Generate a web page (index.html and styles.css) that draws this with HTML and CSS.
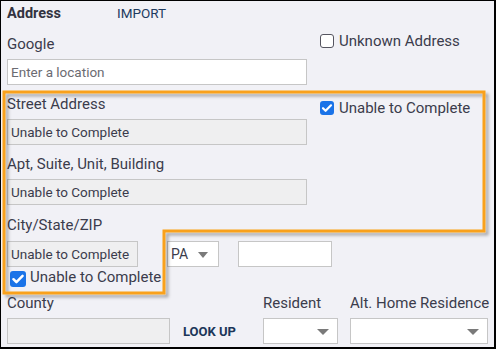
FILE: index.html
```html
<!DOCTYPE html>
<html lang="en">
<head>
  <meta charset="UTF-8" />
  <title>Address</title>
  <link rel="stylesheet" href="styles.css">
</head>
<body>
  <div class="shot">
    <div class="frame">
      <header class="head">
        <span class="title">Address</span>
        <span class="import">IMPORT</span>
      </header>

      <div class="row row-google">
        <label class="label">Google</label>
        <span class="check check-unknown"><span class="box"></span>Unknown Address</span>
      </div>
      <input class="field field-wide" type="text" placeholder="Enter a location">

      <div class="row row-street">
        <label class="label">Street Address</label>
        <span class="check check-street"><span class="box on"><svg viewBox="0 0 14 14"><path d="M3 7.2l2.6 2.6L11 4.3" /></svg></span>Unable to Complete</span>
      </div>
      <div class="field field-wide field-off">Unable to Complete</div>

      <div class="row">
        <label class="label">Apt, Suite, Unit, Building</label>
      </div>
      <div class="field field-wide field-off">Unable to Complete</div>

      <div class="row row-city">
        <label class="label">City/State/ZIP</label>
      </div>
      <div class="city-line">
        <div class="field field-city field-off">Unable to Complete</div>
        <div class="select select-state">PA<span class="arrow"></span></div>
        <div class="field field-zip"></div>
      </div>
      <div class="check check-city"><span class="box on"><svg viewBox="0 0 14 14"><path d="M3 7.2l2.6 2.6L11 4.3" /></svg></span>Unable to Complete</div>

      <div class="bottom">
        <div class="col">
          <label class="label">County</label>
          <div class="county-line">
            <div class="field field-county field-off"></div>
            <span class="lookup">LOOK UP</span>
          </div>
        </div>
        <div class="col">
          <label class="label">Resident</label>
          <div class="select select-resident"><span class="arrow"></span></div>
        </div>
        <div class="col">
          <label class="label">Alt. Home Residence</label>
          <div class="select select-alt"><span class="arrow"></span></div>
        </div>
      </div>
    </div>

    <!-- callout drawn over the form -->
    <svg class="callout" width="496" height="349" viewBox="0 0 496 349">
      <defs>
        <filter id="shade" x="-5%" y="-5%" width="110%" height="115%">
          <feDropShadow dx="3" dy="3" stdDeviation="1.5" flood-color="#000" flood-opacity="0.3" />
        </filter>
      </defs>
      <polygon points="4,92 484,92 484,231 164,231 164,293 4,293" fill="none" stroke="#f9a11b" stroke-width="3" filter="url(#shade)" />
    </svg>
  </div>
</body>
</html>
```

FILE: styles.css
```css
* {
  margin: 0;
  padding: 0;
  box-sizing: border-box;
}

body {
  font-family: Roboto, "Liberation Sans", sans-serif;
  color: #3b3c4c;
  background: #fff;
}

.shot {
  position: relative;
  width: 496px;
  height: 349px;
}

.frame {
  width: 496px;
  height: 349px;
  border-style: solid;
  border-color: #000;
  border-width: 1px 2px 2px 1px;
  background: #f1f1f6;
  padding: 0 6px;
  overflow: hidden;
}

.head {
  display: flex;
  align-items: baseline;
  height: 20px;
  margin-top: 2px;
  line-height: 20px;
}

.title {
  font-size: 14.5px;
  font-weight: 700;
  color: #333340;
  width: 110px;
}

.import {
  font-size: 13.5px;
  font-weight: 400;
  color: #1d3a60;
}

.row {
  display: flex;
  align-items: flex-start;
  height: 20px;
  margin-top: 9px;
}

.row-google {
  margin-top: 11px;
}

.row-city {
  margin-top: 10px;
}

.label {
  display: block;
  font-size: 15px;
  line-height: 20px;
  width: 313px;
  flex-shrink: 0;
}

.check {
  display: flex;
  align-items: center;
  gap: 5px;
  font-size: 15px;
  line-height: 20px;
  white-space: nowrap;
}

.check-unknown {
  margin-top: -3px;
}

.check-street {
  margin-top: 4px;
}

.check-city {
  gap: 4px;
  margin-left: 3px;
  height: 20px;
}

.box {
  width: 14px;
  height: 14px;
  border: 1.5px solid #555560;
  border-radius: 3px;
  background: #fff;
  flex-shrink: 0;
}

.box.on {
  border: none;
  background: #1a73e8;
}

.check-city .box {
  width: 16px;
  height: 16px;
  margin-top: 3px;
}

.box svg {
  display: block;
  width: 100%;
  height: 100%;
  fill: none;
  stroke: #fff;
  stroke-width: 2.2;
  stroke-linecap: round;
  stroke-linejoin: round;
}

.field {
  display: block;
  height: 26px;
  border: 1px solid #c6c6c6;
  background: #fff;
  font-family: inherit;
  font-size: 13.5px;
  color: #3b3c4c;
  line-height: 24px;
  padding: 0 3px;
  white-space: nowrap;
  overflow: hidden;
}

.field::placeholder {
  color: #6b6b72;
}

.field-wide {
  width: 300px;
  margin-top: 5px;
}

.field-off {
  background: #efeff0;
}

.city-line {
  display: flex;
  margin-top: 6px;
}

.field-city {
  width: 131px;
}

.select {
  position: relative;
  height: 26px;
  border: 1px solid #c6c6c6;
  background: #fff;
  font-size: 14px;
  line-height: 24px;
  padding: 0 3px;
}

.arrow {
  position: absolute;
  right: 8px;
  top: 10px;
  width: 0;
  height: 0;
  border-left: 6px solid transparent;
  border-right: 6px solid transparent;
  border-top: 6px solid #7a7a7a;
}

.select-state {
  width: 52px;
  margin-left: 29px;
}

.select-state .arrow {
  right: 10px;
  border-left-width: 5.5px;
  border-right-width: 5.5px;
}

.field-zip {
  width: 94px;
  margin-left: 19px;
}

.bottom {
  display: grid;
  grid-template-columns: 256px 87px 138px;
  margin-top: 6px;
}

.col .label {
  width: auto;
  white-space: nowrap;
}

.county-line {
  display: flex;
  align-items: center;
  margin-top: 5px;
}

.field-county {
  width: 163px;
}

.lookup {
  margin-left: 13px;
  font-size: 13px;
  font-weight: 700;
  color: #1b3659;
}

.select-resident {
  width: 75px;
  margin-top: 5px;
}

.select-alt {
  width: 138px;
  margin-top: 5px;
}

.callout {
  position: absolute;
  top: 0;
  left: 0;
  pointer-events: none;
}
```
